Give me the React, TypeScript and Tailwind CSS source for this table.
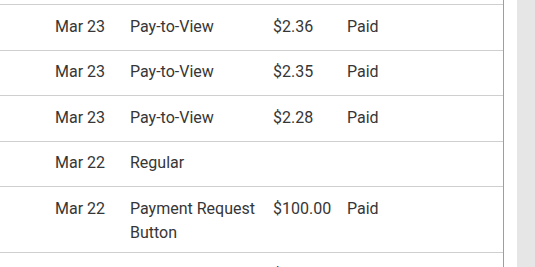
const rows = [
  { date: "Mar 23", type: "Pay-to-View", amount: "$2.36", status: "Paid" },
  { date: "Mar 23", type: "Pay-to-View", amount: "$2.35", status: "Paid" },
  { date: "Mar 23", type: "Pay-to-View", amount: "$2.28", status: "Paid" },
  { date: "Mar 22", type: "Regular", amount: "", status: "" },
  { date: "Mar 22", type: "Payment Request Button", amount: "$100.00", status: "Paid" },
  { date: "", type: "", amount: "$", status: "" },
];

export default function App() {
  return (
    <div className="flex h-[267px] w-[535px] overflow-hidden bg-white font-['Roboto',sans-serif] text-[16px] leading-6 text-[#363636]">
      <div className="w-[504px] shrink-0 border-r border-[#9e9e9e]">
        <div className="h-[5px] border-b border-[#cfcfcf]" />
        {rows.map((r, i) => (
          <div
            key={i}
            className="grid min-h-[45.5px] grid-cols-[55px_75px_143px_74px_1fr] border-b border-[#cfcfcf] pt-[9.5px] pb-[7.5px]"
          >
            <div />
            <div>{r.date}</div>
            <div className="pr-4">{r.type}</div>
            <div>{r.amount}</div>
            <div>{r.status}</div>
          </div>
        ))}
      </div>
      <div className="w-[13px] shrink-0" />
      <div className="flex-1 bg-[#e6e6e6]" />
    </div>
  );
}
